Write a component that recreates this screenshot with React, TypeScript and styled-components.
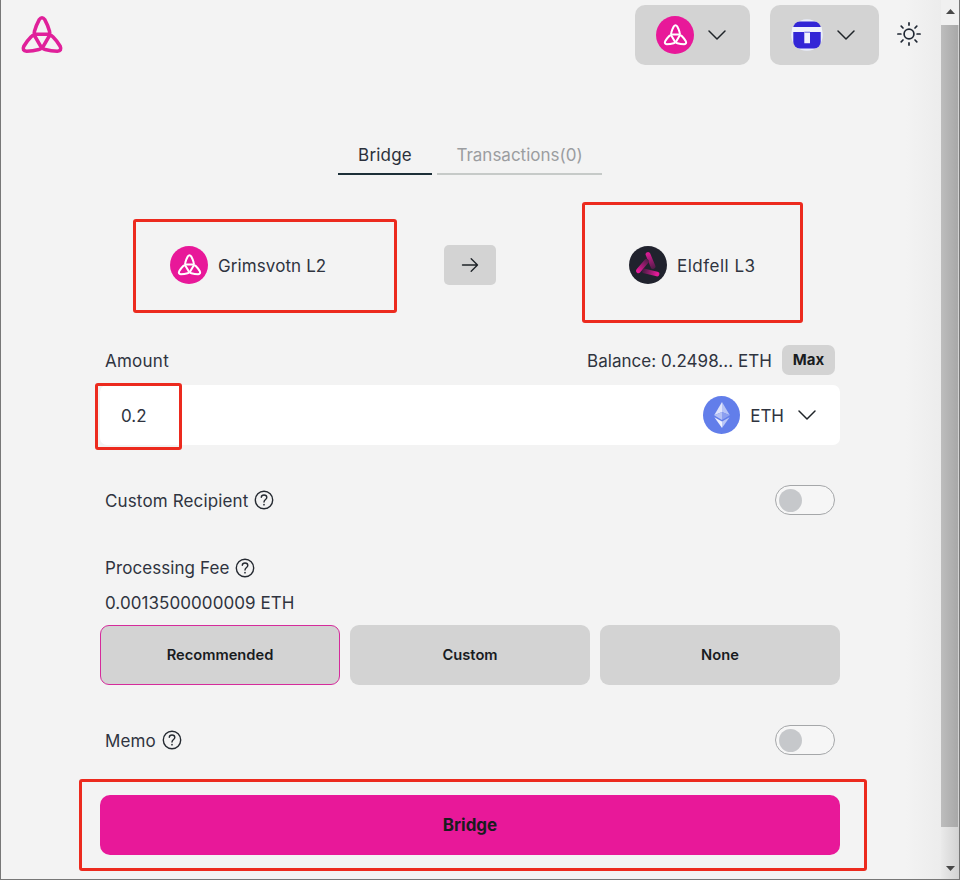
import React from "react";
import styled, { createGlobalStyle } from "styled-components";

const GlobalStyle = createGlobalStyle`
  * { box-sizing: border-box; }
  html, body { margin: 0; padding: 0; background: #f3f3f3; overflow: hidden; }
  button { font: inherit; color: inherit; border: 0; padding: 0; }
  svg { display: block; flex: none; }
`;

const Window = styled.div`
  position: relative;
  display: flex;
  width: 960px;
  height: 880px;
  background: #f3f3f3;
  border: solid #777;
  border-width: 0 1px 1px 1px;
  font-family: Inter, "Liberation Sans", sans-serif;
  font-size: 17px;
  font-weight: 400;
  line-height: 24px;
  color: #2f343f;
  overflow: hidden;
`;

const Page = styled.div`
  width: 940px;
  height: 879px;
  background: linear-gradient(to right, #f3f3f3 905px, #ececec 940px);
`;

const Header = styled.header`
  display: flex;
  align-items: center;
  height: 65px;
  padding: 5px 19px 0 19px;
`;

const HeaderActions = styled.div`
  display: flex;
  align-items: center;
  margin-left: auto;
`;

const Picker = styled.button<{ $width: number; $gap: number }>`
  display: flex;
  align-items: center;
  justify-content: center;
  gap: ${(p) => p.$gap}px;
  width: ${(p) => p.$width}px;
  height: 60px;
  margin-right: 20px;
  padding-right: 2px;
  border-radius: 10px;
  background: #d3d3d3;
`;

const ThemeButton = styled.button`
  display: flex;
  margin: 0 0 2px -3px;
  background: none;
`;

const Disc = styled.span<{ $color: string; $size?: number }>`
  display: flex;
  flex: none;
  align-items: center;
  justify-content: center;
  width: ${(p) => p.$size ?? 38}px;
  height: 38px;
  border-radius: 50%;
  background: ${(p) => p.$color};
  overflow: hidden;
`;

const Main = styled.main`
  display: flex;
  flex-direction: column;
  width: 740px;
  margin-left: 99px;
`;

const Tabs = styled.nav`
  display: flex;
  justify-content: center;
  gap: 5px;
  margin-top: 70px;
`;

const Tab = styled.button<{ $active?: boolean; $width: number }>`
  width: ${(p) => p.$width}px;
  height: 40px;
  border-bottom: 2px solid ${(p) => (p.$active ? "#1c2f38" : "#c6cac8")};
  background: none;
  color: ${(p) => (p.$active ? "#2b303b" : "#9b9da0")};
`;

const Text = styled.span<{ $spacing?: number; $flat?: boolean }>`
  padding-top: ${(p) => (p.$flat ? 0 : 2)}px;
  white-space: nowrap;
  letter-spacing: ${(p) => p.$spacing ?? 0}px;
`;

const TabLabel = styled(Text)`
  display: inline-block;
`;

const Route = styled.section`
  display: grid;
  grid-template-columns: 344px 52px 133px 1fr;
  align-items: center;
  height: 60px;
  margin-top: 60px;
`;

const Chain = styled.div<{ $indent?: number }>`
  display: flex;
  align-items: center;
  gap: 10px;
  grid-column: ${(p) => (p.$indent ? "auto" : "4")};
  padding-left: ${(p) => p.$indent ?? 0}px;
`;

const ArrowButton = styled.button`
  display: flex;
  align-items: center;
  justify-content: center;
  height: 40px;
  border-radius: 5px;
  background: #d3d3d3;
`;

const Row = styled.div<{ $top: number; $height: number }>`
  display: flex;
  align-items: center;
  justify-content: space-between;
  height: ${(p) => p.$height}px;
  margin-top: ${(p) => p.$top}px;
  padding: 0 5px;
`;

const Group = styled.div<{ $gap: number }>`
  display: flex;
  align-items: center;
  gap: ${(p) => p.$gap}px;
`;

const MaxButton = styled.button`
  width: 53px;
  height: 30px;
  border-radius: 7px;
  background: #d3d3d3;
  color: #191c1f;
  font-size: 15px;
  font-weight: 700;
`;

const AmountField = styled.div`
  display: flex;
  align-items: center;
  justify-content: space-between;
  height: 60px;
  margin-top: 10px;
  padding: 0 23px 0 21px;
  border-radius: 7px;
  background: #fff;
`;

const TokenPicker = styled(Group)`
  & > svg {
    margin-left: 3px;
  }
`;

const Switch = styled.button`
  width: 60px;
  height: 30px;
  padding: 0 2.5px;
  border: 1px solid #a5a7a9;
  border-radius: 15px;
  background: #f6f6f6;
`;

const Knob = styled.span`
  display: block;
  width: 23px;
  height: 23px;
  border-radius: 50%;
  background: #c6c8cb;
`;

const FeeOptions = styled.div`
  display: grid;
  grid-template-columns: repeat(3, 1fr);
  gap: 10px;
  margin-top: 10px;
`;

const FeeOption = styled.button<{ $selected?: boolean }>`
  height: 60px;
  border: ${(p) => (p.$selected ? "1px solid #d52b9b" : "0")};
  border-radius: 9px;
  background: #d3d3d3;
  color: #191c1f;
  font-size: 14.7px;
  font-weight: 600;
`;

const Submit = styled.button`
  height: 60px;
  margin-top: 40px;
  border-radius: 10px;
  background: #e81899;
  color: #191c1f;
  font-weight: 700;
`;

const Scrollbar = styled.div`
  display: flex;
  flex-direction: column;
  align-items: center;
  justify-content: space-between;
  width: 18px;
  background: linear-gradient(to right, #eaeaea, #d2d2d2);
`;

const ScrollEnd = styled.div<{ $height: number; $offset: number; $light?: boolean }>`
  display: flex;
  justify-content: center;
  width: 100%;
  height: ${(p) => p.$height}px;
  padding-top: ${(p) => p.$offset}px;
  background: ${(p) => (p.$light ? "#f0f0f0" : "none")};
`;

const ScrollThumb = styled.div`
  flex: 1;
  width: 17px;
  align-self: flex-start;
  background: linear-gradient(to right, #bdbdbd, #a8a8a8);
`;

const Highlight = styled.div<{ $x: number; $y: number; $w: number; $h: number }>`
  position: absolute;
  left: ${(p) => p.$x - 1}px;
  top: ${(p) => p.$y}px;
  width: ${(p) => p.$w}px;
  height: ${(p) => p.$h}px;
  border: 3px solid #ec2a1e;
  border-radius: 3px;
  pointer-events: none;
`;

const PETAL =
  "M16.6 19.8H27.6Q30.6 19.8 29.6 16.6Q28 10.6 25 5.2Q22.1 1.2 19.2 5.2Q16.2 10.6 14.6 16.6Q13.6 19.8 16.6 19.8Z";

const Trefoil = ({ width, color, stroke = 3.6 }: { width: number; color: string; stroke?: number }) => (
  <svg width={width} height={(width * 42) / 44} viewBox="0 0 44.2 41" fill="none" stroke={color} strokeWidth={stroke} strokeLinejoin="round">
    {[0, 120, 240].map((a) => (
      <path key={a} d={PETAL} transform={`rotate(${a} 22.1 24.6)`} />
    ))}
  </svg>
);

const ChevronDown = () => (
  <svg width="20" height="12" viewBox="0 0 20 12" fill="none" stroke="#1f2429" strokeWidth="1.5" strokeLinecap="round" strokeLinejoin="round">
    <path d="M2 2L10 10L18 2" />
  </svg>
);

const Sun = () => (
  <svg width="26" height="26" viewBox="0 0 26 26" fill="none" stroke="#1f2733" strokeWidth="1.7" strokeLinecap="round">
    <circle cx="13" cy="13" r="4.9" />
    <path d="M13 1.9V4.1M13 21.9V24.1M1.9 13H4.9M21.1 13H24.1M5.2 5.2L7 7M19 19L20.8 20.8M5.2 20.8L7 19M19 7L20.8 5.2" />
  </svg>
);

const Arrow = () => (
  <svg width="18" height="16" viewBox="0 0 18 16" fill="none" stroke="#1f2429" strokeWidth="1.4" strokeLinecap="round" strokeLinejoin="round">
    <path d="M1.5 8H16.5M10.2 1.8L16.5 8L10.2 14.2" />
  </svg>
);

const Help = () => (
  <svg width="20" height="20" viewBox="0 0 20 20" fill="none" stroke="#252a31" strokeWidth="1.4" strokeLinecap="round" strokeLinejoin="round">
    <circle cx="10" cy="10" r="8.7" />
    <path d="M7.3 7.2C7.4 5.7 8.6 5 10 5C11.5 5 12.8 5.9 12.8 7.4C12.8 9.4 10 9.5 10 12" />
    <circle cx="10" cy="14.7" r=".85" fill="#252a31" stroke="none" />
  </svg>
);

const WalletMark = () => (
  <svg width="32" height="32" viewBox="0 0 32 32">
    <circle cx="16" cy="16" r="15.8" fill="#e9edfb" />
    <rect x="2.3" y="2.5" width="27.4" height="27" rx="6.5" fill="#3326d6" />
    <path d="M1.3 8H30.7V13H19V24.2H13.3V13H1.3Z" fill="#f1f3fc" />
    <path d="M13.3 12.6H19V14H13.3Z" fill="#8f8dea" />
  </svg>
);

const EldfellMark = () => (
  <svg width="38" height="38" viewBox="0 0 38 38" fill="none" strokeWidth="4.8" strokeLinecap="round">
    <defs>
      <linearGradient id="armTop" gradientUnits="userSpaceOnUse" x1="19" y1="8" x2="26" y2="25">
        <stop stopColor="#d41c91" />
        <stop offset="1" stopColor="#3b1c3c" />
      </linearGradient>
      <linearGradient id="armRight" gradientUnits="userSpaceOnUse" x1="28" y1="28" x2="13" y2="24">
        <stop stopColor="#e51a98" />
        <stop offset="1" stopColor="#3b1c3c" />
      </linearGradient>
      <linearGradient id="armLeft" gradientUnits="userSpaceOnUse" x1="9" y1="25" x2="19" y2="13">
        <stop stopColor="#e51a98" />
        <stop offset="1" stopColor="#4a1c43" />
      </linearGradient>
    </defs>
    <path d="M19 8.4L24 20.5" stroke="url(#armTop)" />
    <path d="M28 28L15.5 25" stroke="url(#armRight)" />
    <path d="M9.4 24.8L17.5 15.3" stroke="url(#armLeft)" />
  </svg>
);

const EthMark = () => (
  <svg width="38" height="38" viewBox="0 0 38 38">
    <path d="M19 6L11.2 19.3L19 16Z" fill="#dfe5fc" />
    <path d="M19 6L26.8 19.3L19 16Z" fill="#b7c4f6" />
    <path d="M11.2 19.3L19 16V24Z" fill="#b5c2f5" />
    <path d="M26.8 19.3L19 16V24Z" fill="#8b9ff0" />
    <path d="M11.4 21.2L19 25.6V32Z" fill="#eef1fe" />
    <path d="M26.6 21.2L19 25.6V32Z" fill="#bac7f7" />
  </svg>
);

const Triangle = ({ down }: { down?: boolean }) => (
  <svg width="9" height="5" viewBox="0 0 9 5" fill="#484848">
    <path d={down ? "M0 0H9L4.5 5Z" : "M0 5H9L4.5 0Z"} />
  </svg>
);

const HIGHLIGHTS = [
  { $x: 133, $y: 219, $w: 264, $h: 94 },
  { $x: 582, $y: 202, $w: 221, $h: 121 },
  { $x: 95, $y: 383, $w: 87, $h: 67 },
  { $x: 79, $y: 779, $w: 788, $h: 92 },
];

export default function App() {
  return (
    <>
      <GlobalStyle />
      <Window>
        <Page>
          <Header>
            <Trefoil width={44} color="#e0209a" />
            <HeaderActions>
              <Picker $width={115} $gap={13}>
                <Disc $color="#e81899">
                  <Trefoil width={25} color="#fff" />
                </Disc>
                <ChevronDown />
              </Picker>
              <Picker $width={109} $gap={13}>
                <WalletMark />
                <ChevronDown />
              </Picker>
              <ThemeButton aria-label="Toggle theme">
                <Sun />
              </ThemeButton>
            </HeaderActions>
          </Header>
          <Main>
            <Tabs>
              <Tab $active $width={94}>
                <TabLabel $spacing={0.2}>Bridge</TabLabel>
              </Tab>
              <Tab $width={165}>
                <TabLabel>Transactions(0)</TabLabel>
              </Tab>
            </Tabs>
            <Route>
              <Chain $indent={70}>
                <Disc $color="#e81899">
                  <Trefoil width={25} color="#fff" />
                </Disc>
                <Text $spacing={0.1}>Grimsvotn L2</Text>
              </Chain>
              <ArrowButton aria-label="Swap direction">
                <Arrow />
              </ArrowButton>
              <Chain>
                <Disc $color="#20222d">
                  <EldfellMark />
                </Disc>
                <Text $spacing={0.5}>Eldfell L3</Text>
              </Chain>
            </Route>
            <Row $top={50} $height={30}>
              <Text $spacing={0.25}>Amount</Text>
              <Group $gap={10}>
                <Text $spacing={0.05}>Balance: 0.2498... ETH</Text>
                <MaxButton>Max</MaxButton>
              </Group>
            </Row>
            <AmountField>
              <Text>0.2</Text>
              <TokenPicker $gap={10}>
                <Disc $color="#627eea" $size={37}>
                  <EthMark />
                </Disc>
                <Text>ETH</Text>
                <ChevronDown />
              </TokenPicker>
            </AmountField>
            <Row $top={40} $height={30}>
              <Group $gap={6}>
                <Text $spacing={0.14}>Custom Recipient</Text>
                <Help />
              </Group>
              <Switch>
                <Knob />
              </Switch>
            </Row>
            <Row $top={40} $height={25}>
              <Group $gap={6}>
                <Text $spacing={0.08} $flat>Processing Fee</Text>
                <Help />
              </Group>
            </Row>
            <Row $top={10} $height={25}>
              <Text $flat $spacing={0.07}>0.0013500000009 ETH</Text>
            </Row>
            <FeeOptions>
              <FeeOption $selected>Recommended</FeeOption>
              <FeeOption>Custom</FeeOption>
              <FeeOption>None</FeeOption>
            </FeeOptions>
            <Row $top={40} $height={30}>
              <Group $gap={6}>
                <Text $spacing={0.1}>Memo</Text>
                <Help />
              </Group>
              <Switch>
                <Knob />
              </Switch>
            </Row>
            <Submit>Bridge</Submit>
          </Main>
        </Page>
        <Scrollbar>
          <ScrollEnd $height={25} $offset={9} $light>
            <Triangle />
          </ScrollEnd>
          <ScrollThumb />
          <ScrollEnd $height={52} $offset={39}>
            <Triangle down />
          </ScrollEnd>
        </Scrollbar>
        {HIGHLIGHTS.map((h) => (
          <Highlight key={`${h.$x}-${h.$y}`} {...h} />
        ))}
      </Window>
    </>
  );
}
